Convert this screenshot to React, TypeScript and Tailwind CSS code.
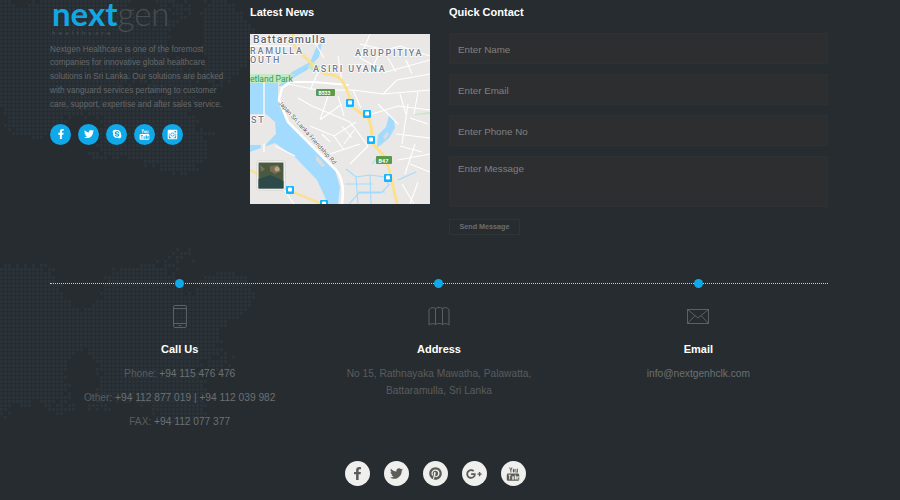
import { FaFacebookF, FaTwitter, FaSkype, FaPinterest, FaGooglePlusG } from 'react-icons/fa';

const leftSocial = [FaFacebookF, FaTwitter, FaSkype];

function OldYoutube({ size = 12 }: { size?: number }) {
  return (
    <svg width={size} height={size} viewBox="0 0 16 16" fill="currentColor">
      <path d="M3.5 0.5h1.2l.8 2 .8-2h1.2L6.100 3.800v2.400H5V3.800zM8.800 2a1 1 0 0 1 1 1v2.200a1 1 0 0 1-2 0V3a1 1 0 0 1 1-1zM10.800 2h1v3.400h.9V2h1v4.200h-2.900z" />
      <path fillRule="evenodd" d="M2.500 7.400h11a1.600 1.600 0 0 1 1.600 1.600v5.200a1.600 1.600 0 0 1-1.600 1.600h-11A1.600 1.600 0 0 1 .9 14.200V9a1.600 1.600 0 0 1 1.600-1.600zM2.600 8.900v.9h1.100v4.500h1V9.800h1.100v-.9zM6.800 10.500v3.800h2.400v-3.800h-.9v3h-.6v-3zM10 8.900v5.400h2.200v-3.800H11V8.900zM12.800 10.500v3.800h1.600v-.8h-.8v-1h.8v-2z" />
    </svg>
  );
}

function OldInstagram({ size = 12 }: { size?: number }) {
  return (
    <svg width={size} height={size} viewBox="0 0 16 16" fill="currentColor">
      <path fillRule="evenodd" d="M2.500 1h11A1.500 1.500 0 0 1 15 2.500v11a1.500 1.500 0 0 1-1.500 1.500h-11A1.500 1.500 0 0 1 1 13.500v-11A1.500 1.500 0 0 1 2.500 1zM11 2.800v2.400h2.400V2.800zM8 5a3 3 0 1 0 0 6 3 3 0 0 0 0-6zM2.700 7v6c0 .2.100.3.300.3h10c.2 0 .3-.1.300-.3V7h-1.200a4.500 4.500 0 1 1-8.200 0z" />
      <circle cx="8" cy="8" r="1.900" />
    </svg>
  );
}

// faint dotted world map behind the footer, cells picked from a few soft blobs
const blobs = [
  [70, 50, 110, 80],
  [150, 130, 60, 40],
  [225, 40, 25, 50],
  [20, 340, 60, 80],
  [150, 340, 70, 80],
  [215, 300, 35, 30],
];

function dotCells() {
  const cells: [number, number][] = [];
  for (let x = 0; x < 290; x += 4) {
    for (let y = 0; y < 440; y += 4) {
      const noise = Math.abs(Math.sin(x * 12.9898 + y * 78.233) * 43758.5453) % 1;
      const coarse = Math.sin(x / 17) * Math.cos(y / 13);
      const hit = blobs.some(([cx, cy, rx, ry]) => {
        const d = ((x - cx) / rx) ** 2 + ((y - cy) / ry) ** 2;
        return d + coarse * 0.5 + (noise - 0.5) * 0.35 < 1;
      });
      if (hit) cells.push([x, y]);
    }
  }
  return cells;
}

function DotMap() {
  return (
    <svg className="pointer-events-none absolute inset-0" width="900" height="500">
      {dotCells().map(([x, y]) => (
        <rect key={x + '-' + y} x={x} y={y} width="3" height="3" rx="1" fill="#2c343b" />
      ))}
    </svg>
  );
}

function MapPreview() {
  const bus = [[100, 69], [117, 80], [121, 106], [138, 144], [40, 156], [74, 170]];
  return (
    <svg viewBox="0 0 180 170" className="block h-[170px] w-[180px]" fontFamily="Roboto, sans-serif">
      <rect width="180" height="170" fill="#e9e8e6" />
      {/* water */}
      <path d="M0 49h28v17l10 23 24 24 23 23 5 17-2 17H78l-11-24-22-23-20-14-25 9z" fill="#a3dbff" />
      <path d="M28 52l14-14 18-10 7-16 5-3-3 14-12 13-14 8-10 8z" fill="#a3dbff" />
      <path d="M0 80h16l9 8 1 12-8 8-4 6h-3v-3l-11 0z" fill="#e9e8e6" />
      <path d="M127 113l1-12 8-8 3-12 5 5 1 8-6 10-8 7z" fill="#a3dbff" />
      <path d="M133 103l4-5 2 2-4 6zM66 122l4 3 5 7-3 1-6-7z" fill="#dcdcdc" />
      <path d="M96 135l10 8 14-2 15 2 4 8-8 8-22 0-10 11M106 143l2 27M120 141l1 29M95 150h28M122 130l5-6M148 146l18-8M108 158l27 0" fill="none" stroke="#a3dbff" strokeWidth="1.100" />
      <path d="M0 40h45l-10 9H0z" fill="#c5e8c5" />
      <path d="M57 32l6-4 7 4-6 6z" fill="#c5e8c5" />
      <path d="M165 80l15-2v2l-15 1z" fill="#c5e8c5" />
      {/* minor roads */}
      <g fill="none" stroke="#fff" strokeWidth="1.100">
        <path d="M38 50l30 6h35l30 4 47-4M70 34l-10 22M103 56l8 18M133 60l14-14 33-6M122 80l26-8 32 4M128 70l20 20M62 72l38 16 18 24M70 86l22-16M60 92l24 10 22-14M80 120l30-10M100 130l18-18M0 12h40M60 0l14 24M120 0l-10 24 26 14 44-12M120 38l10-20 20-6M150 12l30 10M146 100l34 4M158 70l-6 40M165 110l-10 30M92 48l-4-26M148 126l32-6M25 112l20 10M30 150l14 20" />
        <path d="M48 64l14 8M78 62l-8 24M88 62l6 20M84 102l10 14M92 92l10 12M104 96l-10 14M72 100l8 8M150 60l6 20M168 58l-4 22M160 84l18 6M150 112l22 6M160 130l20 8M152 150l12 20M168 148l-8 22M108 30l12 8M138 24l8 14M156 26l6 14M110 10l26 6" />
      </g>
      {/* shoreline road */}
      <g fill="none" stroke="#fff" strokeLinecap="round">
        <path d="M92 170c2-14 1-26-6-34L62 112 38 88 29 66l3-12 8-6" strokeWidth="2.600" />
        <path d="M14 49v31M14 110v8" strokeWidth="1.300" />
        <path d="M40 48h24l34 3" strokeWidth="2" />
      </g>
      <path d="M43 0L45 13 63 31 75 40C85 40 90 43 93 48L97 56 102 73 118 84C122 90 122 100 122 109L135 123C140 135 143 153 147 170" fill="none" stroke="#fce08a" strokeWidth="2.800" />
      <path d="M0 136l38 20 34 14" fill="none" stroke="#fce08a" strokeWidth="2.400" />
      {/* labels */}
      <g fontWeight="500" fill="#6f7d90" letterSpacing="1.800" fontSize="9" stroke="#fff" strokeWidth="1.500" paintOrder="stroke">
        <text x="3" y="9" fontSize="10.500" fill="#5c6470" letterSpacing="1.100">Battaramulla</text>
        <text x="0" y="19.500">RAMULLA</text>
        <text x="0" y="29">OUTH</text>
        <text x="105" y="21.500">ARUPPITIYA</text>
        <text x="63" y="38">ASIRI UYANA</text>
        <text x="1" y="89">ST</text>
      </g>
      <text x="0" y="48" fill="#2e9e4f" fontSize="8.500">etland Park</text>
      <text x="28" y="69" fill="#555" fontSize="6.200" stroke="#fff" strokeWidth="1" paintOrder="stroke" transform="rotate(48 28 69)">Japan Sri Lanka Friendship Rd</text>
      <g>
        <rect x="66" y="55" width="19" height="7" rx="1" fill="#5a9a4a" />
        <text x="68.500" y="60.500" fill="#fff" fontSize="5" fontWeight="700">B533</text>
        <rect x="126" y="122" width="16" height="8" rx="1" fill="#5a9a4a" />
        <text x="128.500" y="128.500" fill="#fff" fontSize="5.500" fontWeight="700">B47</text>
      </g>
      {bus.map(([x, y]) => (
        <g key={x + '-' + y}>
          <rect x={x - 4} y={y - 4} width="8" height="8" rx="1" fill="#12b5ff" />
          <rect x={x - 2} y={y - 2.400} width="4" height="4" rx="0.800" fill="#fff" />
        </g>
      ))}
      {/* satellite thumbnail */}
      <rect x="7" y="127" width="28" height="29" rx="1.500" fill="#fff" stroke="#bbb" strokeWidth="0.500" />
      <rect x="8.500" y="128.500" width="25" height="26" fill="#4a5a42" />
      <path d="M8.500 145l12-4 13 6v7.500h-25z" fill="#2c4a4a" />
      <path d="M20 132l8-1 3 6-6 3-5-3zM10 131l5 4-4 3z" fill="#7a6e52" />
      <circle cx="27" cy="135" r="2.500" fill="#b5a486" />
    </svg>
  );
}

function PhoneIcon() {
  return (
    <svg width="14" height="23" viewBox="0 0 14 23" fill="none" stroke="#5d6062" strokeWidth="1">
      <rect x="0.500" y="0.500" width="13" height="22" rx="1.500" />
      <path d="M.5 3.500h13M.5 18.500h13M6 20.500h2" />
    </svg>
  );
}

function MapIcon() {
  return (
    <svg width="22" height="20" viewBox="0 0 22 20" fill="none" stroke="#5d6062" strokeWidth="1">
      <path d="M1 3.500C3 1.500 5 1 7.500 2.500 10 1 12 1 14.500 2.500 17 1 19 1.500 21 3.500V19c-2-1.500-4-2-6.500-.5-2.500-1.500-4.500-1.500-7 0C5 17 3 17.500 1 19z" />
      <path d="M7.500 2.500v16M14.500 2.500v16" />
    </svg>
  );
}

function MailIcon() {
  return (
    <svg width="22" height="15" viewBox="0 0 22 15" fill="none" stroke="#5d6062" strokeWidth="1">
      <rect x="0.500" y="0.500" width="21" height="14" />
      <path d="M.5.500L11 9 21.500.500M.5 14.500l7.500-8M21.500 14.500l-7.500-8" />
    </svg>
  );
}

export default function App() {
  return (
    <div className="relative h-[500px] w-[900px] overflow-hidden bg-[#272c30] font-['Liberation_Sans',Arial,sans-serif]">
      <DotMap />
      <div className="relative ml-[50px] w-[778px]">
        {/* top columns */}
        <div className="flex h-[283px] items-start">
          <div className="w-[200px]">
            <div className="flex h-[37px] items-start pl-[2px] font-['Lato',sans-serif]">
              <div className="relative">
                <div className="flex items-baseline text-[33px] leading-[27px]">
                  <span className="font-bold text-[#10a8e4]">next</span>
                  <span className="font-light text-[#4a4d4f]">gen</span>
                </div>
                <div className="absolute left-0 top-[30px] text-[6px] leading-[6px] tracking-[3.400px] text-[#4d5052]">healthcare</div>
              </div>
            </div>
            <p className="mt-[5.500px] w-[178px] text-[8.200px] leading-[13.800px] text-[#66686a]">
              Nextgen Healthcare is one of the foremost companies for innovative global healthcare solutions in Sri Lanka. Our solutions are backed with vanguard services pertaining to customer care, support, expertise and after sales service.
            </p>
            <div className="mt-[12.500px] flex gap-[7px]">
              {leftSocial.map((Icon, i) => (
                <span key={i} className="flex h-[21px] w-[21px] items-center justify-center rounded-full bg-[#0fa8e8] text-[10px] text-white">
                  <Icon />
                </span>
              ))}
              <span className="flex h-[21px] w-[21px] items-center justify-center rounded-full bg-[#0fa8e8] text-white">
                <OldYoutube size={11} />
              </span>
              <span className="flex h-[21px] w-[21px] items-center justify-center rounded-full bg-[#0fa8e8] text-white">
                <OldInstagram size={11} />
              </span>
            </div>
          </div>

          <div className="w-[199px]">
            <h4 className="mt-[5px] h-[29px] text-[11px] font-bold leading-[14px] text-white">Latest News</h4>
            <MapPreview />
          </div>

          <div className="w-[379px]">
            <h4 className="mt-[5px] h-[28px] text-[11px] font-bold leading-[14px] text-white">Quick Contact</h4>
            <form className="flex flex-col gap-[10px]">
              <input placeholder="Enter Name" className="h-[31px] w-full border border-[#2c3134] bg-[#2d2e30] px-[8px] pt-[1px] text-[9.800px] text-[#808080] outline-none placeholder:text-[#808080]" />
              <input placeholder="Enter Email" className="h-[31px] w-full border border-[#2c3134] bg-[#2d2e30] px-[8px] pt-[1px] text-[9.800px] text-[#808080] outline-none placeholder:text-[#808080]" />
              <input placeholder="Enter Phone No" className="h-[31px] w-full border border-[#2c3134] bg-[#2d2e30] px-[8px] pt-[1px] text-[9.800px] text-[#808080] outline-none placeholder:text-[#808080]" />
              <textarea placeholder="Enter Message" className="h-[51px] w-full resize-none border border-[#2c3134] bg-[#2d2e30] px-[8px] py-[5.500px] text-[9.800px] leading-[12px] text-[#808080] outline-none placeholder:text-[#808080]" />
              <button type="button" className="mt-[2px] h-[16px] w-[71px] border border-[#2f3437] text-[7.200px] font-bold leading-[14px] text-[#6c6e70]">Send Message</button>
            </form>
          </div>
        </div>

        {/* contact strip */}
        <div className="relative border-t border-dotted border-[#c9cbcc]">
          <div className="grid grid-cols-3 text-center">
            <div className="relative flex flex-col items-center">
              <span className="absolute top-[-5px] h-[9px] w-[9px] rounded-full bg-[#0fa8e8]" />
              <div className="mt-[20px] flex h-[24px] items-center"><PhoneIcon /></div>
              <h4 className="mt-[14px] text-[11px] font-bold leading-[14px] text-white">Call Us</h4>
              <p className="mt-[12px] text-[10.200px] leading-[12px] text-[#595c5e]">Phone: <span className="text-[#6d7072]">+94 115 476 476</span></p>
              <p className="mt-[12px] text-[10.200px] leading-[12px] text-[#595c5e]">Other: <span className="text-[#6d7072]">+94 112 877 019 | +94 112 039 982</span></p>
              <p className="mt-[12px] text-[10.200px] leading-[12px] text-[#595c5e]">FAX: <span className="text-[#6d7072]">+94 112 077 377</span></p>
            </div>
            <div className="relative flex flex-col items-center">
              <span className="absolute top-[-5px] h-[9px] w-[9px] rounded-full bg-[#0fa8e8]" />
              <div className="mt-[20px] flex h-[24px] items-center"><MapIcon /></div>
              <h4 className="mt-[14px] text-[11px] font-bold leading-[14px] text-white">Address</h4>
              <p className="mt-[9px] w-[200px] text-[10.200px] leading-[17px] text-[#595c5e]">No 15, Rathnayaka Mawatha, Palawatta, Battaramulla, Sri Lanka</p>
            </div>
            <div className="relative flex flex-col items-center">
              <span className="absolute top-[-5px] h-[9px] w-[9px] rounded-full bg-[#0fa8e8]" />
              <div className="mt-[20px] flex h-[24px] items-center"><MailIcon /></div>
              <h4 className="mt-[14px] text-[11px] font-bold leading-[14px] text-white">Email</h4>
              <p className="mt-[12px] text-[10.200px] leading-[12px] text-[#6d7072]">info@nextgenhclk.com</p>
            </div>
          </div>
        </div>

        {/* bottom social */}
        <div className="mt-[33px] flex justify-center gap-[14px] pr-[8px]">
          {[FaFacebookF, FaTwitter, FaPinterest, FaGooglePlusG].map((Icon, i) => (
            <span key={i} className={i === 3 ? 'flex h-[25px] w-[25px] items-center justify-center rounded-full bg-[#efefed] text-[16px] text-[#5c5c58]' : 'flex h-[25px] w-[25px] items-center justify-center rounded-full bg-[#efefed] text-[13px] text-[#5c5c58]'}>
              <Icon />
            </span>
          ))}
          <span className="flex h-[25px] w-[25px] items-center justify-center rounded-full bg-[#efefed] text-[#5c5c58]">
            <OldYoutube size={14} />
          </span>
        </div>
      </div>
    </div>
  );
}
